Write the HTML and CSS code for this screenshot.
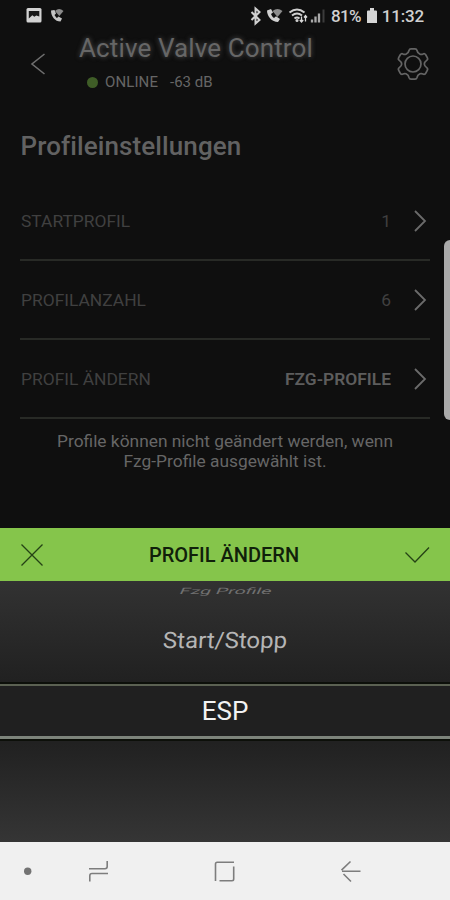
FILE: index.html
```html
<!DOCTYPE html>
<html lang="de">
<head>
  <meta charset="utf-8">
  <title>Active Valve Control</title>
  <link rel="stylesheet" href="styles.css">
</head>
<body>

<div class="status">
  <svg class="status-left" width="40" height="18" viewBox="0 0 40 18">
    <rect x="0.500" y="2" width="15" height="14.500" rx="1.500" fill="#d2d2d2"/>
    <path d="M2.800 12.500V5h10.500v5.500l-3-1-2 1.200-2-1.500z" fill="#181818"/>
    <path d="M25 4.500c0 6 4 11 9.500 11l1.500-3-3.500-2-1.500 1.500c-1-.7-2-2-2.500-3l1.500-1.500-1.500-3.500z" fill="#c4c4c4"/>
    <path d="M29 5q4-4 8.500 0l-4.200 5z" fill="#8a8a8a"/>
  </svg>
  <svg class="status-right" width="78" height="20" viewBox="249 6 78 20">
    <path d="M251.500 12l8 8-4 3.500V8.500l4 3.500-8 8" fill="none" stroke="#d0d0d0" stroke-width="2"/>
    <path d="M267 10.500c0 6 5 11.500 11 11.500l2-3-4-2.800-2 1.800c-1.300-1-2.500-2.500-3-4l2-1.500-2-3.500z" fill="#d0d0d0"/>
    <path d="M272.500 11q5-4 10 0l-5 6z" fill="#8c8c8c"/>
    <path d="M289.500 12.500q7.500-6 15 0M292 15.500q5-4 10 0M294.500 18.500q2.500-2 5 0" fill="none" stroke="#cfcfcf" stroke-width="2"/>
    <circle cx="297" cy="20.500" r="1.500" fill="#cfcfcf"/>
    <path d="M301.500 21.500v-5M299.800 20l1.700 2 1.700-2M305.500 16v5.500M304 17.500l1.500-2 1.500 2" fill="none" stroke="#d8d8d8" stroke-width="1.300"/>
    <path d="M312 22.500v-3M315.500 22.500v-6M319 22.500v-9" stroke="#a8a8a8" stroke-width="2.300"/>
    <path d="M323.500 22.500V9.500" stroke="#3c3c3c" stroke-width="2"/>
  </svg>
  <span class="percent">81%</span>
  <svg class="battery" width="10" height="16" viewBox="0 0 10 16">
    <path d="M0 3.500q0-1 1-1h2V0h4v2.500h2q1 0 1 1V15H0z" fill="#d6d6d6"/>
  </svg>
  <span class="clock">11:32</span>
</div>

<div class="header">
  <svg class="back" width="16" height="24" viewBox="0 0 16 24">
    <path d="M14.500 2L2 12l12.500 10" fill="none" stroke="#6f6f6f" stroke-width="1.600"/>
  </svg>
  <div class="title">
    <h1>Active Valve Control</h1>
    <div class="state"><i class="dot"></i><span class="online">ONLINE</span><span class="signal">-63 dB</span></div>
  </div>
  <svg class="gear" width="34" height="34" viewBox="-17 -17 34 34">
    <g fill="none" stroke="#646464" stroke-width="1.700">
      <path d="M-2-15.200H2Q3.600-15.200 4-13.500Q4.400-11 7-9.800Q8.600-9.200 10-10Q11.600-11 12.700-9.200L14.300-6.300Q15.200-4.600 13.700-3.600Q11.300-2 11.300 0Q11.300 2 13.700 3.600Q15.200 4.600 14.300 6.300L12.700 9.200Q11.600 11 10 10Q8.600 9.200 7 9.800Q4.400 11 4 13.500Q3.600 15.200 2 15.200H-2Q-3.600 15.200-4 13.500Q-4.400 11-7 9.800Q-8.600 9.200-10 10Q-11.600 11-12.700 9.200L-14.300 6.300Q-15.200 4.600-13.700 3.600Q-11.300 2-11.300 0Q-11.300-2-13.700-3.600Q-15.200-4.600-14.300-6.300L-12.700-9.200Q-11.600-11-10-10Q-8.600-9.200-7-9.800Q-4.400-11-4-13.500Q-3.600-15.200-2-15.200Z"/>
      <circle r="8"/>
    </g>
  </svg>
</div>

<div class="settings">
  <h2>Profileinstellungen</h2>
  <div class="row">
    <span class="label">STARTPROFIL</span>
    <span class="value">1</span>
    <svg width="14" height="24" viewBox="0 0 14 24"><path d="M2 2l10 10L2 22"/></svg>
  </div>
  <div class="row">
    <span class="label">PROFILANZAHL</span>
    <span class="value">6</span>
    <svg width="14" height="24" viewBox="0 0 14 24"><path d="M2 2l10 10L2 22"/></svg>
  </div>
  <div class="row">
    <span class="label">PROFIL ÄNDERN</span>
    <span class="value strong">FZG-PROFILE</span>
    <svg width="14" height="24" viewBox="0 0 14 24"><path d="M2 2l10 10L2 22"/></svg>
  </div>
  <p class="note">Profile können nicht geändert werden, wenn<br>Fzg-Profile ausgewählt ist.</p>
</div>

<div class="sheet-bar">
  <svg width="24" height="24" viewBox="0 0 24 24"><path d="M1.500 1.500l21 21M22.500 1.500l-21 21"/></svg>
  <span>PROFIL ÄNDERN</span>
  <svg width="26" height="18" viewBox="0 0 26 18"><path d="M1.500 6.500l9.500 9.500L25 1.500"/></svg>
</div>

<div class="picker">
  <div class="option far"><span>Fzg Profile</span></div>
  <div class="option near"><span>Start/Stopp</span></div>
  <div class="option selected"><span>ESP</span></div>
</div>

<div class="nav">
  <svg width="450" height="58" viewBox="0 842 450 58">
    <circle cx="27.700" cy="871.300" r="3.700" fill="#737373"/>
    <g fill="none" stroke="#7d7d7d" stroke-width="1.600">
      <path d="M89 868.700h16q2.200 0 2.200-2.200v-5.500M108 873.500H92q-2.200 0-2.200 2.200v5.800"/>
      <path d="M215.500 881v-17q0-1.700 1.700-1.700H234M233.700 866.500V879q0 1.700-1.700 1.700h-12.500"/>
      <path d="M360.500 871.200H342M350.500 861.500L341.500 870.200M343.500 874L351 881.500"/>
    </g>
  </svg>
</div>

<div class="edge-handle"></div>

</body>
</html>
```

FILE: styles.css
```css
* { box-sizing:border-box; }
body { margin:0; width:450px; height:900px; position:relative; overflow:hidden; background:#0f0f0f; color:#666; font-family:Roboto, sans-serif; }
svg { display:block; flex:none; }
h1, h2, p { margin:0; font-weight:normal; }

.status { height:32px; padding:0 26px; display:flex; align-items:center; color:#d0d0d0; font-size:17px; font-weight:500; }
.status-left { margin-bottom:2px; }
.status-right { margin-left:183px; }
.percent { margin-left:4px; width:31px; letter-spacing:-.7px; white-space:nowrap; }
.battery { margin-left:5px; }
.clock { margin-left:5px; letter-spacing:-.2px; white-space:nowrap; }

.header { height:80px; padding:0 20px 0 30px; display:flex; align-items:flex-start; }
.back { margin-top:20px; }
.title { margin-left:33px; flex:1; }
h1 { font-size:26px; line-height:32px; letter-spacing:.12px; white-space:nowrap; text-shadow:0 0 5px #555; }
.state { display:flex; align-items:center; height:20px; margin-top:8px; padding-left:8px; font-size:15px; }
.dot { width:11px; height:11px; border-radius:50%; background:#3f5d27; }
.online { margin-left:7px; letter-spacing:.1px; }
.signal { margin-left:12px; }
.gear { margin-top:15px; }

.settings { height:416px; padding:0 20px; }
h2 { height:70px; line-height:68px; padding-left:.5px; font-size:26px; font-weight:500; letter-spacing:.1px; color:#626262; }
.row { height:79px; border-bottom:2px solid #282a26; display:flex; align-items:center; font-size:17.4px; }
.label { flex:1; padding-left:1px; color:#404040; }
.value { margin-right:22px; color:#404040; }
.value.strong { font-weight:600; color:#5d5d5d; }
.row svg { margin-right:3px; }
.row path { fill:none; stroke:#6b6b6b; stroke-width:1.800; }
.note { padding-top:12px; font-size:17.35px; line-height:20px; text-align:center; }

.sheet-bar { height:53px; padding:0 20px; display:flex; align-items:center; justify-content:space-between; background:#85c54b; color:#10200a; font-size:20px; font-weight:500; }
.sheet-bar path { fill:none; stroke:#254215; stroke-width:1.300; }

.picker { height:261px; background:linear-gradient(#323232, #202020 40%, #202020 60%, #353535); }
.option { display:flex; justify-content:center; align-items:center; }
.far { height:20px; padding-left:2px; font-size:19.5px; color:#707070; }
.far span { transform:scaleY(.45) skewX(-12deg); }
.near { height:83px; padding-bottom:5px; font-size:24px; color:#b5b5b5; }
.near span { transform:scaleY(.94) skewX(-3deg); }
.selected { height:55px; border-top:2px solid #5b6152; border-bottom:3px solid #7d847b; background:#202020; box-shadow:0 0 0 2px #0c0f09; font-size:26px; color:#f2f2f2; }

.nav { height:58px; background:#f0f0f0; }
.edge-handle { position:absolute; left:444px; top:240px; width:12px; height:180px; border-radius:6px; background:#aaa; }
```
